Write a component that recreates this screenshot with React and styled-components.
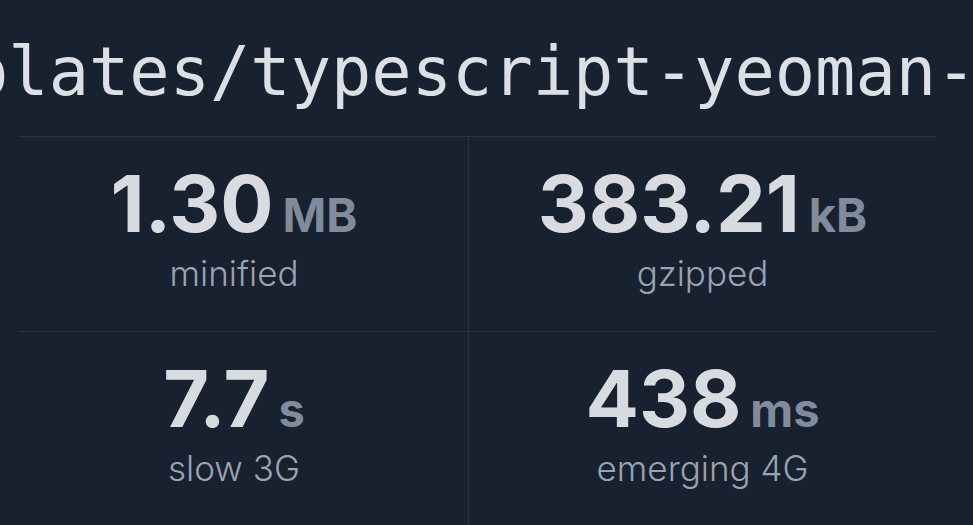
import styled, { createGlobalStyle } from 'styled-components';

const GlobalStyle = createGlobalStyle`
  html, body {
    margin: 0;
    padding: 0;
    background: #172130;
  }
  body {
    font-family: Inter, "Noto Sans", sans-serif;
    overflow: hidden;
  }
`;

const Page = styled.div`
  width: 973px;
  height: 525px;
  background: #172130;
  overflow: hidden;
`;

const Title = styled.h1`
  margin: 0;
  height: 136px;
  box-sizing: border-box;
  padding-top: 39px;
  font-family: "DejaVu Sans Mono", "Liberation Mono", monospace;
  font-size: 67px;
  font-weight: 400;
  line-height: 1;
  color: #dcdfe4;
  white-space: nowrap;
  text-indent: -32px;
`;

const Stats = styled.div`
  display: grid;
  grid-template-columns: 468px 468px;
  grid-auto-rows: 195px;
`;

const Cell = styled.div`
  display: flex;
  flex-direction: column;
  align-items: center;
  padding-top: 28px;
  box-sizing: border-box;
  border-left: ${p => (p.$right ? '1px solid #273240' : 'none')};
  background: linear-gradient(#2a3544, #2a3544) no-repeat;
  background-size: ${p => (p.$right ? '100%' : 'calc(100% - 18px)')} 1px;
  background-position: right top;
`;

const Value = styled.div`
  display: flex;
  align-items: baseline;
  line-height: 1;
`;

const Number = styled.span`
  font-size: 79px;
  font-weight: 700;
  color: #d8dbe0;
`;

const Unit = styled.span`
  margin-left: 9px;
  font-size: 47px;
  font-weight: 700;
  color: #808c9c;
`;

const Label = styled.div`
  margin-top: 13px;
  font-size: 35px;
  font-weight: 300;
  line-height: 1;
  color: #9ba3ae;
`;

const stats = [
  { value: '1.30', unit: 'MB', label: 'minified' },
  { value: '383.21', unit: 'kB', label: 'gzipped' },
  { value: '7.7', unit: 's', label: 'slow 3G' },
  { value: '438', unit: 'ms', label: 'emerging 4G' },
];

export default function App() {
  return (
    <Page>
      <GlobalStyle />
      <Title>plates/typescript-yeoman-</Title>
      <Stats>
        {stats.map((s, i) => (
          <Cell key={s.label} $right={i % 2 === 1}>
            <Value>
              <Number>{s.value}</Number>
              <Unit>{s.unit}</Unit>
            </Value>
            <Label>{s.label}</Label>
          </Cell>
        ))}
      </Stats>
    </Page>
  );
}
